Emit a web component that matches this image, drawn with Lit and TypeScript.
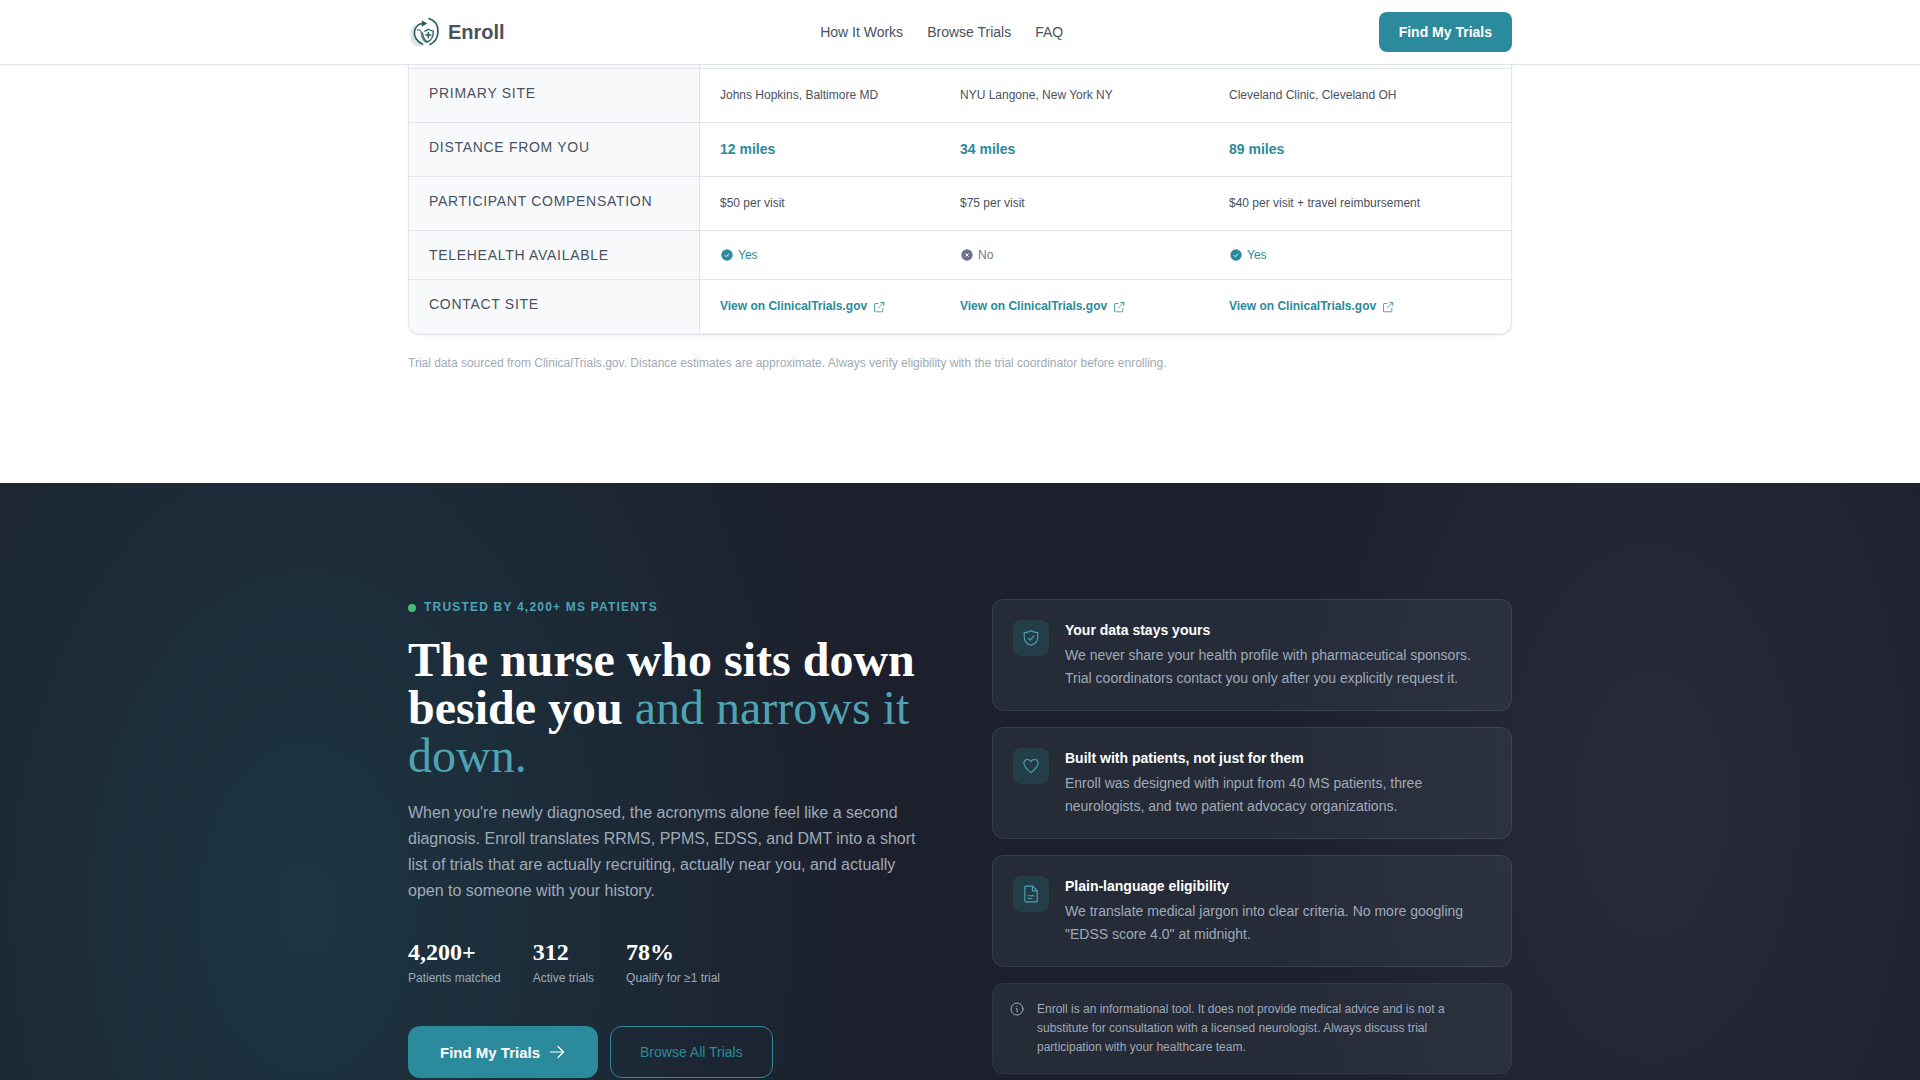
import { LitElement, html, css, svg } from "lit";
import { customElement } from "lit/decorators.js";

const sites = [
  { place: "Johns Hopkins, Baltimore MD", miles: "12 miles", pay: "$50 per visit", remote: true },
  { place: "NYU Langone, New York NY", miles: "34 miles", pay: "$75 per visit", remote: false },
  { place: "Cleveland Clinic, Cleveland OH", miles: "89 miles", pay: "$40 per visit + travel reimbursement", remote: true },
];

const stats = [
  ["4,200+", "Patients matched"],
  ["312", "Active trials"],
  ["78%", "Qualify for ≥1 trial"],
];

const shield = svg`<path d="M8 1.500C9.800 2.700 11.800 3.200 14 3.200V7.300c0 3.700-2.400 6-6 7.200-3.600-1.200-6-3.500-6-7.200V3.200C4.200 3.200 6.200 2.700 8 1.500z"/><path d="M5.600 8.200l1.700 1.700 3.200-3.700"/>`;
const heart = svg`<path d="M8 14C5.500 12 1.700 9 1.700 5.600 1.700 3.700 3.100 2.200 4.900 2.200c1.300 0 2.400.7 3.100 1.900.7-1.200 1.800-1.900 3.100-1.900 1.800 0 3.200 1.500 3.200 3.400C14.300 9 10.500 12 8 14z"/>`;
const page = svg`<path d="M9.500 1H3.300a.8.8 0 0 0-.8.8v12.400c0 .5.300.8.800.8h9.400a.8.8 0 0 0 .8-.8V5L9.500 1z"/><path d="M9.300 1.200v4h4M5.400 9.500h5.200M5.400 12h3.200"/>`;

const promises = [
  { icon: shield, title: "Your data stays yours", text: "We never share your health profile with pharmaceutical sponsors. Trial coordinators contact you only after you explicitly request it." },
  { icon: heart, title: "Built with patients, not just for them", text: "Enroll was designed with input from 40 MS patients, three neurologists, and two patient advocacy organizations." },
  { icon: page, title: "Plain-language eligibility", text: "We translate medical jargon into clear criteria. No more googling \"EDSS score 4.0\" at midnight." },
];

@customElement("app-root")
export class AppRoot extends LitElement {
  static styles = css`
    :host {
      display: block;
      background: #fff;
      color: #4a5160;
      font-family: "Liberation Sans", Arial, sans-serif;
      font-size: 14px;
      line-height: 21px;
    }
    * { box-sizing: border-box; }
    h2, h3, p { margin: 0; }
    a { color: inherit; text-decoration: none; }
    button { font: inherit; cursor: pointer; }
    svg { display: block; flex: none; }
    .line { fill: none; stroke: currentColor; stroke-linecap: round; stroke-linejoin: round; }
    .wrap { max-width: 1200px; margin: 0 auto; padding: 0 48px; }

    .header { border-bottom: 1px solid #e2e5ea; background: #fff; box-shadow: 0 1px 2px rgba(0, 0, 0, 0.04); }
    .bar { display: flex; align-items: center; justify-content: space-between; height: 64px; }
    .brand { display: flex; align-items: center; gap: 8px; font-size: 20px; font-weight: 700; }
    .nav { display: flex; gap: 24px; }
    .cta { height: 40px; padding: 0 20px; border: 0; border-radius: 8px; background: #2b8a9c; color: #fff; font-weight: 700; }

    .compare { padding-bottom: 109px; }
    .frame {
      overflow: hidden;
      border: 1px solid #e2e5ea;
      border-top: 0;
      border-radius: 0 0 12px 12px;
      box-shadow: 0 1px 3px rgba(0, 0, 0, 0.06);
    }
    .table { width: 100%; border-collapse: separate; border-spacing: 0; }
    .table th, .table td { padding: 16px 20px; border-bottom: 1px solid #e2e5ea; text-align: left; }
    .table th {
      width: 291px;
      border-right: 1px solid #e2e5ea;
      background: #f7f9fb;
      font-weight: 400;
      line-height: 16px;
      letter-spacing: 0.05em;
      text-transform: uppercase;
      vertical-align: top;
    }
    .table .tail th, .table .tail td { height: 4px; padding: 0; }
    .table tr:last-child th, .table tr:last-child td { border-bottom-color: #eceef2; }
    .second { width: 240px; }
    .third { width: 269px; }
    .small { font-size: 12px; }
    .miles { color: #2b8a9c; font-weight: 700; }
    .flag { display: flex; align-items: center; gap: 4px; height: 16px; color: #70758c; font-size: 12px; line-height: 16px; }
    .flag.yes { color: #2b8a9c; }
    .site { display: flex; align-items: center; gap: 6px; color: #2b8a9c; font-size: 12px; font-weight: 700; }
    .source { padding-top: 18px; color: #a0aab6; font-size: 12px; }

    .hero {
      padding: 116px 0;
      background:
        radial-gradient(580px 900px at 16% 60%, rgba(30, 130, 145, 0.22) 0%, transparent 100%),
        radial-gradient(400px 700px at 86% 45%, rgba(90, 84, 124, 0.2) 0%, transparent 100%),
        #1c202c;
    }
    .split { display: grid; grid-template-columns: 1fr 1fr; gap: 64px; align-items: start; }
    .eyebrow {
      display: flex;
      align-items: center;
      gap: 8px;
      margin-bottom: 20px;
      color: #4fa3b3;
      font-size: 12px;
      font-weight: 700;
      line-height: 17px;
      letter-spacing: 0.1em;
      text-transform: uppercase;
    }
    .dot { width: 8px; height: 8px; border-radius: 50%; background: #48bb78; }
    .title { color: #fff; font: 700 48px/48px "Liberation Serif", "Times New Roman", serif; }
    .soft { color: #4fa3b3; font-weight: 400; }
    .lead { margin-top: 20px; color: #a0aab8; font-size: 16px; line-height: 26px; }
    .stats { display: flex; gap: 32px; margin-top: 36px; }
    .stat { display: flex; flex-direction: column; gap: 4px; color: #a0aab8; font-size: 12px; line-height: 20px; }
    .figure { color: #fff; font: 700 24px/24px "Liberation Serif", "Times New Roman", serif; }
    .actions { display: flex; gap: 12px; margin-top: 38px; }
    .primary, .outline { display: flex; align-items: center; gap: 8px; height: 52px; border-radius: 12px; }
    .primary { padding: 0 32px; border: 0; background: #2b8a9c; color: #fff; font-size: 15px; font-weight: 700; }
    .outline { padding: 0 29px; border: 1px solid #2b8a9c; background: none; color: #2b8a9c; }

    .cards { display: grid; gap: 16px; }
    .card, .note {
      display: flex;
      border: 1px solid rgba(220, 235, 240, 0.1);
      border-radius: 12px;
      background: rgba(150, 180, 190, 0.08);
      color: #a0aab8;
    }
    .card { gap: 16px; padding: 20px; line-height: 23px; }
    .card-title { margin-bottom: 4px; color: #fff; font-size: 14px; line-height: 20px; }
    .badge {
      display: grid;
      flex: none;
      place-items: center;
      width: 36px;
      height: 36px;
      border-radius: 8px;
      background: rgba(35, 130, 140, 0.22);
      color: #4fa3b3;
    }
    .note { gap: 12px; padding: 16px; border-color: rgba(220, 235, 240, 0.06); font-size: 12px; line-height: 19px; }
  `;

  private flag(on: boolean) {
    return html`<span class="flag ${on ? "yes" : ""}">
      <svg width="14" height="14" viewBox="0 0 14 14">
        <circle cx="7" cy="7" r="5.700" fill=${on ? "#2b8a9c" : "#6c7190"}></circle>
        <path d=${on ? "M4.900 7.200l1.500 1.500 2.700-3" : "M5.500 5.500l3 3M8.500 5.500l-3 3"} fill="none" stroke="#fff"></path>
      </svg>${on ? "Yes" : "No"}</span>`;
  }

  render() {
    return html`
      <header class="header">
        <div class="wrap bar">
          <a class="brand" href="#">
            <svg width="32" height="32" viewBox="0 0 32 32">
              <path d="M8 7C2 12 1 20 4 27c3 4 8 5 13 2C7 25 4 15 8 7z" fill="#dfe5e7"/>
              <g fill="none" stroke="#2a5f66" stroke-width="1.400" stroke-linecap="round">
                <path d="M21 2.500c6 2 9.300 7.200 9 13.500-.3 6-3.500 10.500-8 12.500" stroke-width="1.700"/>
                <path d="M14.500 28C9 26 5.500 20.500 6.500 15 7.700 9.500 12 7 17 7.500" stroke-width="1.700"/>
                <path d="M14.500 5.500l3.500 2-3.500 2z" fill="#2a5f66"/>
                <path d="M14.500 17c.5 4.500 2.500 7.500 5 9 4-2 6-5.500 5.800-10.900-1.800-.1-3.300-.6-5-1.800-1 .8-2 1.400-3.300 1.700"/>
                <path d="M9.500 14c3-.5 3.800 1.500 4 4s1.500 6 4.500 8.500" stroke="#4e8088"/>
                <path d="M20.300 16.500v5M17.800 19h5" stroke-width="1.600"/>
              </g>
            </svg>
            Enroll
          </a>
          <nav class="nav">
            <a href="#how">How It Works</a>
            <a href="#browse">Browse Trials</a>
            <a href="#faq">FAQ</a>
          </nav>
          <button class="cta">Find My Trials</button>
        </div>
      </header>

      <main>
        <section class="wrap compare">
          <div class="frame">
            <table class="table">
              <tbody>
                <tr class="tail"><th></th><td class="second"></td><td class="third"></td><td></td></tr>
                <tr><th scope="row">Primary site</th>${sites.map((s) => html`<td class="small">${s.place}</td>`)}</tr>
                <tr><th scope="row">Distance from you</th>${sites.map((s) => html`<td class="miles">${s.miles}</td>`)}</tr>
                <tr><th scope="row">Participant compensation</th>${sites.map((s) => html`<td class="small">${s.pay}</td>`)}</tr>
                <tr><th scope="row">Telehealth available</th>${sites.map((s) => html`<td>${this.flag(s.remote)}</td>`)}</tr>
                <tr><th scope="row">Contact site</th>${sites.map(() => html`<td>
                  <a class="site" href="#site">View on ClinicalTrials.gov
                    <svg class="line" width="12" height="12" viewBox="0 0 12 12" stroke-width="0.800">
                      <path d="M5 2.500H2.200a.7.700 0 0 0-.7.700v6.900c0 .4.300.7.700.7h6.900c.4 0 .7-.3.700-.7V7.200M7.500 1.500H10.800v3.300M10.800 1.500L5.500 6.800"/>
                    </svg>
                  </a></td>`)}</tr>
              </tbody>
            </table>
          </div>
          <p class="source">Trial data sourced from ClinicalTrials.gov. Distance estimates are approximate. Always verify eligibility with the trial coordinator before enrolling.</p>
        </section>

        <section class="hero">
          <div class="wrap split">
            <div>
              <p class="eyebrow"><span class="dot"></span>Trusted by 4,200+ MS patients</p>
              <h2 class="title">The nurse who sits down beside you <span class="soft">and narrows it down.</span></h2>
              <p class="lead">When you're newly diagnosed, the acronyms alone feel like a second diagnosis. Enroll translates RRMS, PPMS, EDSS, and DMT into a short list of trials that are actually recruiting, actually near you, and actually open to someone with your history.</p>
              <div class="stats">
                ${stats.map(([n, label]) => html`<div class="stat"><span class="figure">${n}</span><span>${label}</span></div>`)}
              </div>
              <div class="actions">
                <button class="primary">Find My Trials
                  <svg class="line" width="18" height="18" viewBox="0 0 18 18" stroke-width="1.200"><path d="M2.500 9h13M10 3.500L15.500 9 10 14.500"/></svg>
                </button>
                <button class="outline">Browse All Trials</button>
              </div>
            </div>
            <div class="cards">
              ${promises.map((p) => html`<article class="card">
                <span class="badge"><svg class="line" width="18" height="18" viewBox="0 0 16 16">${p.icon}</svg></span>
                <div><h3 class="card-title">${p.title}</h3><p>${p.text}</p></div>
              </article>`)}
              <aside class="note">
                <svg class="line" width="16" height="16" viewBox="0 0 16 16"><circle cx="8" cy="9" r="6"/><path d="M7.500 8.500H8v3.200h.6M8 6.200v.1"/></svg>
                <p>Enroll is an informational tool. It does not provide medical advice and is not a substitute for consultation with a licensed neurologist. Always discuss trial participation with your healthcare team.</p>
              </aside>
            </div>
          </div>
        </section>
      </main>
    `;
  }
}
